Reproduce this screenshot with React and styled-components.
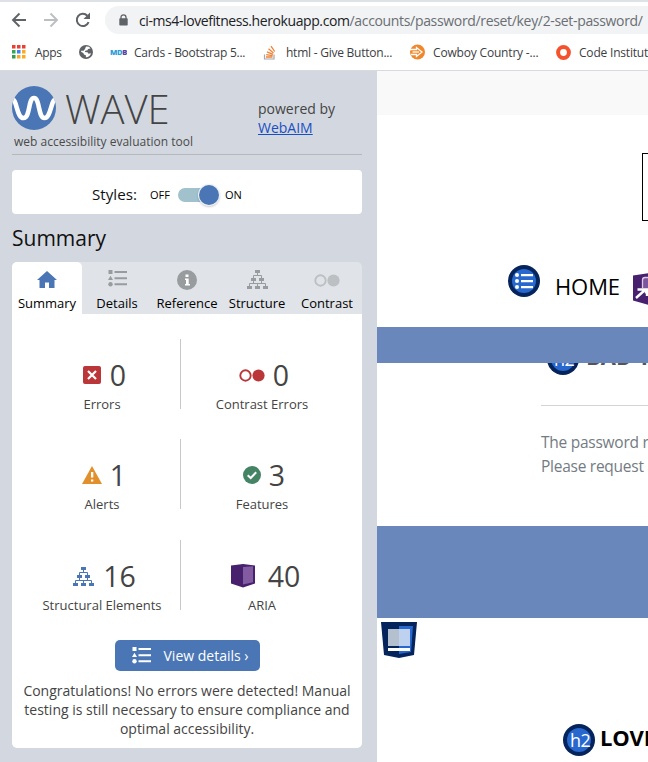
import React from 'react';
import styled, { createGlobalStyle } from 'styled-components';

const GlobalStyle = createGlobalStyle`
  * { box-sizing: border-box; }
  body { margin: 0; background: #fff; overflow: hidden; font-family: "Open Sans", "Noto Sans", sans-serif; }
  svg { display: block; flex: none; }
`;

const Window = styled.div`
  width: 648px;
  height: 762px;
  display: flex;
  flex-direction: column;
  overflow: hidden;
`;

/* ---------- browser chrome ---------- */
const Toolbar = styled.div`
  height: 38px;
  flex: none;
  border-top: 2px solid #dee1e6;
  display: flex;
  align-items: center;
  padding-left: 11px;
`;
const NavIcons = styled.div`
  display: flex;
  align-items: center;
  gap: 15.5px;
  width: 94px;
  flex: none;
`;
const Omnibox = styled.div`
  flex: 1;
  height: 28px;
  border-radius: 14px 0 0 14px;
  background: #f1f3f4;
  display: flex;
  align-items: center;
  padding-left: 14px;
  font-size: 14px;
  letter-spacing: -0.41px;
  color: #202124;
  white-space: nowrap;
  svg { margin-right: 11px; }
`;
const UrlPath = styled.span`
  color: #6b6e73;
  letter-spacing: -0.33px;
`;
const Bookmarks = styled.div`
  height: 33px;
  flex: none;
  border-bottom: 1px solid #d8dadd;
  display: flex;
  align-items: center;
  padding: 0 0 4px 12px;
  white-space: nowrap;
`;
const Bookmark = styled.div`
  display: flex;
  align-items: center;
  flex: none;
  width: ${p => p.$w}px;
  gap: ${p => p.$gap || 8}px;
  font-size: 12px;
  letter-spacing: ${p => p.$track || 0}px;
  color: #3c4043;
`;
const Columns = styled.div`
  flex: 1;
  display: flex;
  min-height: 0;
`;

/* ---------- WAVE sidebar ---------- */
const Sidebar = styled.aside`
  width: 377px;
  flex: none;
  background: #d3d8e0;
  padding: 15px 15px 0 12px;
  display: flex;
  flex-direction: column;
`;
const Brand = styled.header`
  height: 69px;
  display: flex;
  border-bottom: 1px solid #b5b8bb;
  color: #444;
`;
const BrandMain = styled.div`
  width: 246px;
`;
const LogoRow = styled.div`
  display: flex;
  height: 44px;
`;
const Wordmark = styled.div`
  font-size: 40px;
  font-weight: 300;
  line-height: 44px;
  letter-spacing: -0.1px;
  margin: 1px 0 0 9px;
`;
const Tagline = styled.div`
  margin: 3px 0 0 2px;
  font-size: 12px;
  line-height: 18px;
  color: #4a4a4a;
`;
const Powered = styled.div`
  padding-top: 13px;
  font-size: 14px;
  line-height: 19px;
  a { color: #1a4fc4; display: block; text-decoration: underline; }
`;
const StylesPanel = styled.div`
  margin-top: 15px;
  height: 44px;
  border-radius: 4px;
  background: #fff;
  display: flex;
  align-items: center;
  padding: 6px 0 0 80px;
  font-size: 15.2px;
  color: #111;
`;
const StylesTitle = styled.span`
  width: 58px;
  margin-top: -2px;
`;
const SwitchLabel = styled.span`
  margin-top: -1px;
  font-size: 11px;
  color: #000;
`;
const Switch = styled.div`
  width: 41px;
  height: 14px;
  margin: 0 6px 0 8px;
  border-radius: 7px;
  background: #a1c1cc;
  display: flex;
  align-items: center;
  justify-content: flex-end;
`;
const Knob = styled.div`
  width: 20px;
  height: 20px;
  flex: none;
  border-radius: 50%;
  background: #4a76b5;
  box-shadow: 0 0 0 1px #eef2f7, 0 1px 2px 1px rgba(0, 0, 0, 0.2);
`;
const Heading = styled.h1`
  margin: 9px 0 9px;
  font-size: 21px;
  font-weight: 400;
  line-height: 30px;
  color: #111;
`;
const Tabs = styled.nav`
  display: flex;
  height: 52px;
  flex: none;
  background: #e0e3e8;
  border-radius: 5px 5px 0 0;
`;
const Tab = styled.div`
  width: 70px;
  display: flex;
  flex-direction: column;
  align-items: center;
  border-radius: 5px 5px 0 0;
  background: ${p => (p.$active ? '#fff' : 'transparent')};
  font-size: 13px;
  line-height: 18px;
  color: #000;
`;
const TabIcon = styled.div`
  height: 32px;
  padding-top: ${p => p.$top}px;
`;
const Panel = styled.section`
  height: 434px;
  background: #fff;
  border-radius: 0 0 5px 5px;
  padding-top: 25px;
  display: flex;
  flex-direction: column;
  align-items: center;
  color: #444;
`;
const Stats = styled.div`
  display: grid;
  grid-template-columns: 157px 162px;
  grid-template-rows: 100px 101px 70px;
  margin-left: -7px;
`;
const Stat = styled.div`
  height: 70px;
  display: flex;
  flex-direction: column;
  align-items: center;
  padding-top: 18px;
  &:nth-child(odd) { border-right: 1px solid #c8c8c8; }
`;
const Count = styled.div`
  display: flex;
  align-items: center;
  gap: ${p => p.$gap}px;
  height: 36px;
  padding-left: ${p => p.$shift || 4}px;
  font-size: 28.5px;
  line-height: 36px;
  color: #444;
`;
const Caption = styled.div`
  margin-top: 3px;
  font-size: 13px;
  line-height: 17px;
`;
const DetailsButton = styled.button`
  margin-top: 30px;
  flex: none;
  width: 145px;
  height: 31px;
  border: 0;
  border-radius: 5px;
  background: #4a76b5;
  color: #fff;
  font: 14px "Open Sans", sans-serif;
  display: flex;
  align-items: center;
  gap: 13px;
  padding: 0 0 1px 17px;
  white-space: nowrap;
`;
const Message = styled.p`
  margin: 10px 0 0;
  width: 340px;
  text-align: center;
  font-size: 14px;
  line-height: 19px;
`;

/* ---------- evaluated page ---------- */
const Page = styled.main`
  flex: 1;
  min-width: 0;
  overflow: hidden;
  background: #fff;
  white-space: nowrap;
`;
const TopStrip = styled.div`
  height: 44px;
  background: #f9f9f9;
`;
const SearchArea = styled.div`
  height: 150px;
  padding: 38px 0 0 265px;
`;
const SearchBox = styled.div`
  width: 200px;
  height: 68px;
  border: 1px solid #000;
`;
const MainNav = styled.div`
  height: 62px;
  padding-left: 131px;
  display: flex;
  font-size: 22px;
  line-height: 30px;
  color: #000;
`;
const NavLabel = styled.span`
  width: 78px;
  flex: none;
  margin: 6px 0 0 15px;
  letter-spacing: -0.1px;
`;
const AriaBadge = styled.div`
  margin-top: 8px;
`;
const Band = styled.div`
  height: ${p => p.$h}px;
  background: #6987bb;
`;
const Article = styled.div`
  height: 163px;
  overflow: hidden;
  padding-left: 164px;
`;
const ClippedTitle = styled.h2`
  margin: -20px 0 0;
  height: 63px;
  display: flex;
  padding-left: 6px;
  gap: 7px;
  font-size: 22px;
  font-weight: 700;
  line-height: 27px;
  color: #555;
  border-bottom: 1px solid #d4d4d4;
`;
const Body = styled.p`
  margin: 24px 0 0;
  font-size: 15.5px;
  line-height: 24px;
  letter-spacing: -0.26px;
  color: #747b82;
`;
const Landmark = styled.div`
  height: 106px;
  padding: 4px 0 0 4px;
`;
const FooterTitle = styled.h2`
  margin: 0;
  display: flex;
  padding-left: 186px;
  gap: 5px;
  font-size: 22px;
  font-weight: 700;
  letter-spacing: -0.2px;
  line-height: 27px;
  color: #000;
`;
const BadgeText = styled.text`
  font: 18px "Open Sans", sans-serif;
  letter-spacing: -0.5px;
  fill: #fff;
`;

const BackIcon = () => <svg width="16" height="16" viewBox="0 0 16 16" fill="none" stroke="#5f6368" strokeWidth="1.9"><path d="M15 8H2.500M8.500 1.500L2 8l6.500 6.500" /></svg>;
const ForwardIcon = () => <svg width="16" height="16" viewBox="0 0 16 16" fill="none" stroke="#bcbec1" strokeWidth="1.9"><path d="M1 8h12.500M7.500 1.500L14 8l-6.500 6.500" /></svg>;
const ReloadIcon = () => <svg width="18" height="18" viewBox="0 0 18 18"><path d="M14.600 11.200A6.100 6.100 0 1 1 13.300 4.700" fill="none" stroke="#5f6368" strokeWidth="2" /><path d="M16 1.500V8H9.500z" fill="#5f6368" /></svg>;
const LockIcon = () => <svg width="9" height="12" viewBox="0 0 9 12"><path d="M2 5V3.300a2.500 2.500 0 0 1 5 0V5" fill="none" stroke="#5f6368" strokeWidth="1.300" /><rect x="0.300" y="4.300" width="8.400" height="7.200" rx="0.800" fill="#5f6368" /></svg>;
const appColors = ['#ea3f33', '#ea3f33', '#ea3f33', '#34a853', '#3983f2', '#f9ab22', '#349b50', '#f9ab22', '#f9ab22'];
const AppsIcon = () => <svg width="14" height="14">{appColors.map((c, i) => <rect key={i} x={(i % 3) * 5} y={Math.floor(i / 3) * 5} width="3.500" height="3.500" fill={c} />)}</svg>;
const GlobeIcon = () => <svg width="14" height="14" viewBox="0 0 14 14"><circle cx="7" cy="7" r="7" fill="#5f6368" /><path d="M7 1.500L10 1.700 11.500 3.500 9 4 8.500 5.300 6.300 5.800 5.800 7 8.500 7.300 9.500 8.700 12 8.300C11.300 10.800 9 12.500 6.800 12.300L7 10.500 5 9.500 4.300 8 2 6.800 2.300 5.800 4.600 5.800 6 4z" fill="#fff" /></svg>;
const MdbText = styled.text`
  font: 800 7.600px "Open Sans", sans-serif;
  letter-spacing: -0.4px;
  fill: #2d9ed8;
  tspan { fill: #5a40a5; }
`;
const MdbIcon = () => <svg width="17" height="8"><MdbText x="0" y="7">MD<tspan>B</tspan></MdbText></svg>;
const StackIcon = () => <svg width="14" height="15" viewBox="0 0 14 15" fill="none"><path d="M1.500 9.500v4.500h9.500V9.500" stroke="#a4a6a8" strokeWidth="1.200" /><path d="M3 12h6.500M3.200 9.600l6.400 1M4 6.800l6 2.500M5.500 3.800l5 4.100M8 1.200l3.700 5.300" stroke="#f08034" strokeWidth="1.300" /></svg>;
const CowboyIcon = () => <svg width="17" height="16" viewBox="0 0 17 16"><circle cx="8.500" cy="8" r="7.500" fill="#f0872b" /><path d="M1 5.500h6.500V3.500L13 8l-5.500 4.500v-2H2" fill="none" stroke="#fff" strokeWidth="1.300" /><path d="M3.500 8h6.500" stroke="#fff" strokeWidth="1.300" /></svg>;
const RingIcon = () => <svg width="15" height="15"><circle cx="7.500" cy="7.500" r="5.400" fill="none" stroke="#f4512c" strokeWidth="4" /></svg>;

const WaveLogo = () => <svg width="44" height="44" viewBox="0 0 44 44"><defs><clipPath id="disc"><circle cx="22" cy="22" r="22" /></clipPath></defs><circle cx="22" cy="22" r="22" fill="#4a76b5" /><path clipPath="url(#disc)" d="M0 13C5 13 4.500 32 11.500 32S16 12 22 12s4 20 10.500 20S39 13 44 13" fill="none" stroke="#fff" strokeWidth="4.600" /></svg>;
const HomeIcon = () => <svg width="20" height="17" viewBox="0 0 20 17"><path d="M10 0l10 9h-2.500v8H12v-5.500H8V17H2.500V9H0z" fill="#4a76b5" /></svg>;
const ListIcon = ({ color }) => <svg width="19" height="17" viewBox="0 0 19 17" fill={color}><path d="M.500 0h4v4h-4zM2.500 5.800L5 10H0z" /><circle cx="2.500" cy="14.200" r="2.200" /><path d="M6.500 1h12.500v2H6.500zM6.500 7.200h12.500v2H6.500zM6.500 13.300h12.500v2H6.500z" /></svg>;
const InfoIcon = () => <svg width="20" height="20"><circle cx="10" cy="10" r="10" fill="#999c9e" /><path d="M8.500 4.500h3v2.500h-3zM8 8.500h3.700V14h1.300v1.500H8V14h1v-4H8z" fill="#fff" /></svg>;
const TreeIcon = ({ color }) => <svg width="21" height="19" viewBox="0 0 21 19" fill={color}><path d="M8 0h5v3H8zM4 8h5v3H4zM12 8h5v3h-5zM0 16h5v3H0zM8 16h5v3H8zM16 16h5v3h-5z" /><path d="M10.500 3v2.500M6.500 8V5.500h8V8M6.500 11v2.500M14.500 11v2.500M2.500 16v-2.500h16V16M10.500 13.500V16" fill="none" stroke={color} /></svg>;
const ContrastIcon = ({ color }) => <svg width="26" height="13"><circle cx="6.500" cy="6.500" r="5.200" fill="none" stroke={color} strokeWidth="1.900" /><circle cx="19.500" cy="6.500" r="6.100" fill={color} /></svg>;
const ErrorIcon = () => <svg width="18" height="18"><rect width="18" height="18" rx="2" fill="#ba3639" /><path d="M5 5l8 8M13 5l-8 8" stroke="#fff" strokeWidth="2.200" /></svg>;
const AlertIcon = () => <svg width="20" height="18"><path d="M10 0l10 18H0z" fill="#e2902c" /><path d="M9 6h2.300v5.500H9zM9 13.500h2.300v2H9z" fill="#fff" /></svg>;
const CheckIcon = () => <svg width="18" height="18"><circle cx="9" cy="9" r="9" fill="#448465" /><path d="M4.700 9.200l3 2.800 5.500-5.700" fill="none" stroke="#fff" strokeWidth="2" /></svg>;
const AriaIcon = () => <svg width="24" height="24" viewBox="0 0 24 24"><path d="M0 1.500L12 0l12 1.500v18L12 23.500 0 19.500z" fill="#47206e" /><path d="M12 3l10-.8v16L12 20.500z" fill="#825ba0" /></svg>;
const NavListBadge = () => <svg width="32" height="32"><circle cx="16" cy="16" r="16" fill="#04245b" /><circle cx="16" cy="16" r="12" fill="#2767ce" /><g fill="#fff"><circle cx="9" cy="10" r="2" /><circle cx="9" cy="16" r="2" /><circle cx="9" cy="22" r="2" /><path d="M13 9h12v2.200H13zM13 15h12v2.200H13zM13 21h12v2.200H13z" /></g></svg>;
const HeadingBadge = () => <svg width="32" height="32"><circle cx="16" cy="16" r="16" fill="#04245b" /><circle cx="16" cy="16" r="12" fill="#2767ce" /><BadgeText x="7" y="23">h2</BadgeText></svg>;
const AriaLabelIcon = () => <svg width="32" height="34"><path d="M0 2.500L16 0l16 2.500v25L16 32 0 27.500z" fill="#47206e" /><path d="M9.500 14.500V7q0-2.500 2.500-2.500h6v15H9.500z" fill="#7d579b" /><path d="M9.500 15V7q0-2.500 2.500-2.500h5" fill="none" stroke="#d9cbe5" strokeWidth="1.300" /><path d="M3 25l9.500-8.500M4.500 16.500h9.500V23M12 19l5 1.500" fill="none" stroke="#fff" strokeWidth="2.400" /></svg>;
const FooterLandmark = () => <svg width="36" height="36"><path d="M0 0h36l-3 33-15 3-15-3z" fill="#04245b" /><path d="M18 4h14l-2 26-12 2z" fill="#2767ce" /><path d="M7 7h11v17H7z" fill="#b4c0ce" /><path d="M18 7h11v17H18z" fill="#bed1ef" /><path d="M7 26h22v3H7z" fill="#fff" /></svg>;

const tabs = [
  ['Summary', <HomeIcon />, 9],
  ['Details', <ListIcon color="#999c9e" />, 8],
  ['Reference', <InfoIcon />, 8],
  ['Structure', <TreeIcon color="#999c9e" />, 8],
  ['Contrast', <ContrastIcon color="#bcc0c3" />, 12],
];
const stats = [
  ['Errors', 0, <ErrorIcon />, 9, 5],
  ['Contrast Errors', 0, <ContrastIcon color="#ba3639" />, 8],
  ['Alerts', 1, <AlertIcon />, 8],
  ['Features', 3, <CheckIcon />, 8],
  ['Structural Elements', 16, <TreeIcon color="#4a76b5" />, 9, 5],
  ['ARIA', 40, <AriaIcon />, 13, 7],
];

export default function App() {
  return (
    <Window>
      <GlobalStyle />
      <Toolbar>
        <NavIcons><BackIcon /><ForwardIcon /><ReloadIcon /></NavIcons>
        <Omnibox><LockIcon />ci-ms4-lovefitness.herokuapp.com<UrlPath>/accounts/password/reset/key/2-set-password/</UrlPath></Omnibox>
      </Toolbar>
      <Bookmarks>
        <Bookmark $w={67} $gap={9} $track={-0.35}><AppsIcon />Apps</Bookmark>
        <Bookmark $w={31}><GlobeIcon /></Bookmark>
        <Bookmark $w={153} $gap={7} $track={-0.27}><MdbIcon />Cards - Bootstrap 5...</Bookmark>
        <Bookmark $w={146} $gap={9} $track={-0.24}><StackIcon />html - Give Button...</Bookmark>
        <Bookmark $w={147} $gap={7} $track={-0.18}><CowboyIcon />Cowboy Country -...</Bookmark>
        <Bookmark $w={110} $track={-0.2}><RingIcon />Code Institute</Bookmark>
      </Bookmarks>
      <Columns>
        <Sidebar>
          <Brand>
            <BrandMain>
              <LogoRow><WaveLogo /><Wordmark>WAVE</Wordmark></LogoRow>
              <Tagline>web accessibility evaluation tool</Tagline>
            </BrandMain>
            <Powered>powered by<a>WebAIM</a></Powered>
          </Brand>
          <StylesPanel>
            <StylesTitle>Styles:</StylesTitle>
            <SwitchLabel>OFF</SwitchLabel>
            <Switch><Knob /></Switch>
            <SwitchLabel>ON</SwitchLabel>
          </StylesPanel>
          <Heading>Summary</Heading>
          <Tabs>
            {tabs.map(([label, icon, top], i) => (
              <Tab key={label} $active={i === 0}><TabIcon $top={top}>{icon}</TabIcon>{label}</Tab>
            ))}
          </Tabs>
          <Panel>
            <Stats>
              {stats.map(([label, n, icon, gap, shift]) => (
                <Stat key={label}><Count $gap={gap} $shift={shift}>{icon}{n}</Count><Caption>{label}</Caption></Stat>
              ))}
            </Stats>
            <DetailsButton><ListIcon color="#fff" />View details ›</DetailsButton>
            <Message>Congratulations! No errors were detected! Manual testing is still necessary to ensure compliance and optimal accessibility.</Message>
          </Panel>
        </Sidebar>
        <Page>
          <TopStrip />
          <SearchArea><SearchBox /></SearchArea>
          <MainNav>
            <NavListBadge />
            <NavLabel>HOME</NavLabel>
            <AriaBadge><AriaLabelIcon /></AriaBadge>
          </MainNav>
          <Band $h={36} />
          <Article>
            <ClippedTitle><HeadingBadge />BAD TOKEN</ClippedTitle>
            <Body>The password reset link was invalid.<br />Please request a new password reset.</Body>
          </Article>
          <Band $h={92} />
          <Landmark><FooterLandmark /></Landmark>
          <FooterTitle><HeadingBadge />LOVE FITNESS</FooterTitle>
        </Page>
      </Columns>
    </Window>
  );
}
